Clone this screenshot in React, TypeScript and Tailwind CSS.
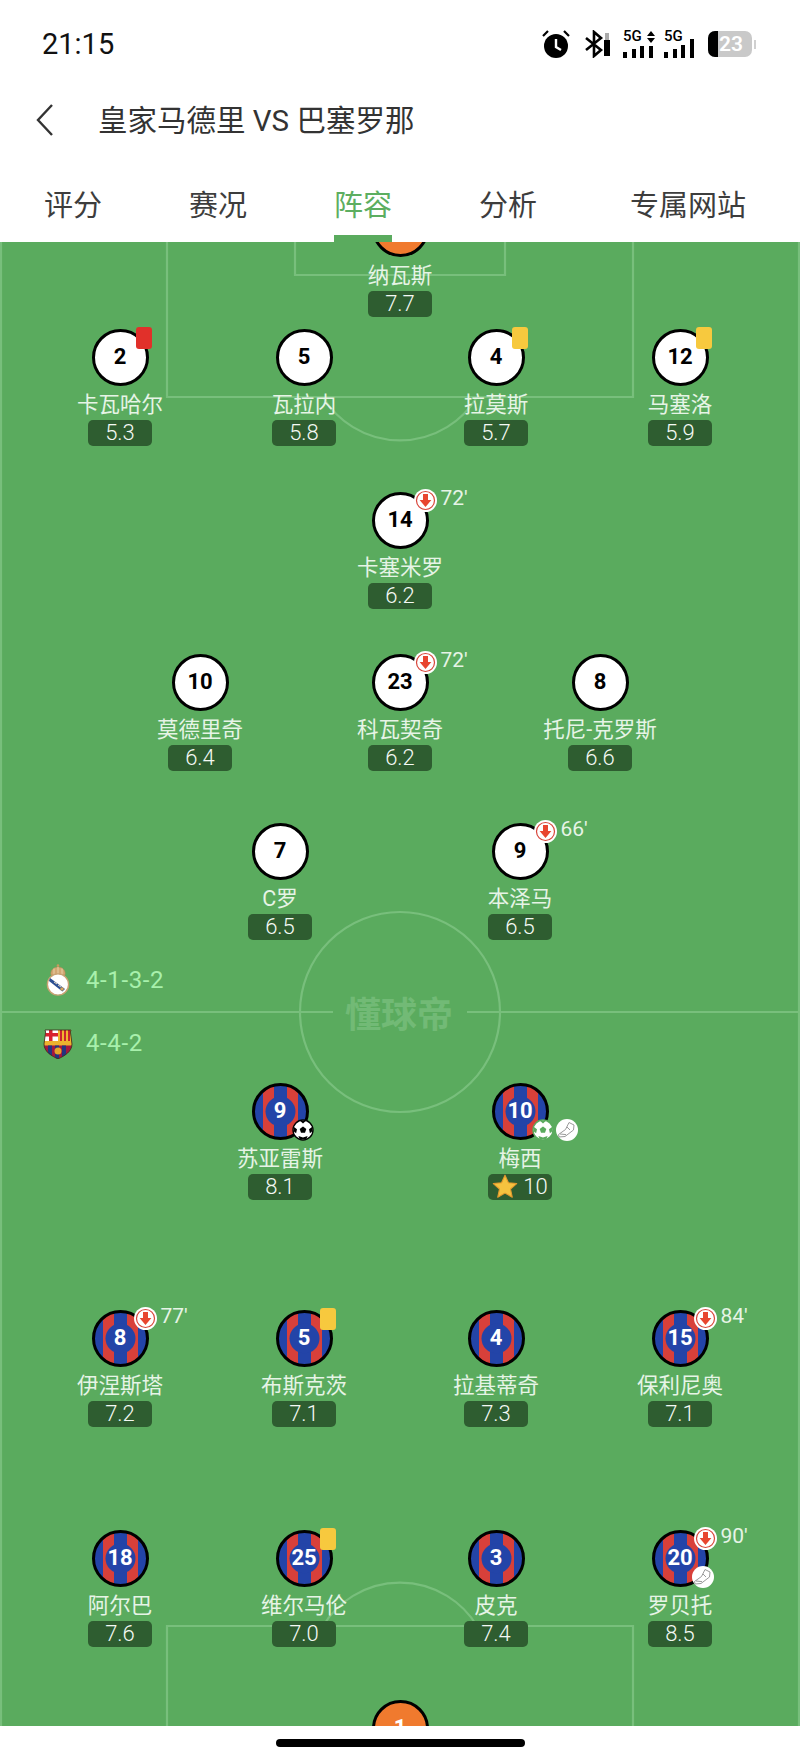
const CJK = "font-['Roboto','Noto_Sans_CJK_SC',sans-serif]";

type Badge = "red" | "yellow" | "ball" | "ballGreen" | "boot";

type Player = {
  no?: number;
  name?: string;
  rating?: string;
  x: number;
  y: number;
  kit: "white" | "barca" | "keeper";
  sub?: string;
  badges?: Badge[];
  star?: boolean;
};

const PITCH_TOP = 242;

// the two keepers are cut by the pitch edges, only what still shows is kept
const players: Player[] = [
  { name: "纳瓦斯", rating: "7.7", x: 400, y: 228, kit: "keeper" },
  { no: 2, name: "卡瓦哈尔", rating: "5.3", x: 120, y: 357, kit: "white", badges: ["red"] },
  { no: 5, name: "瓦拉内", rating: "5.8", x: 304, y: 357, kit: "white" },
  { no: 4, name: "拉莫斯", rating: "5.7", x: 496, y: 357, kit: "white", badges: ["yellow"] },
  { no: 12, name: "马塞洛", rating: "5.9", x: 680, y: 357, kit: "white", badges: ["yellow"] },
  { no: 14, name: "卡塞米罗", rating: "6.2", x: 400, y: 520, kit: "white", sub: "72'" },
  { no: 10, name: "莫德里奇", rating: "6.4", x: 200, y: 682, kit: "white" },
  { no: 23, name: "科瓦契奇", rating: "6.2", x: 400, y: 682, kit: "white", sub: "72'" },
  { no: 8, name: "托尼-克罗斯", rating: "6.6", x: 600, y: 682, kit: "white" },
  { no: 7, name: "C罗", rating: "6.5", x: 280, y: 851, kit: "white" },
  { no: 9, name: "本泽马", rating: "6.5", x: 520, y: 851, kit: "white", sub: "66'" },
  { no: 9, name: "苏亚雷斯", rating: "8.1", x: 280, y: 1111, kit: "barca", badges: ["ball"] },
  { no: 10, name: "梅西", rating: "10", x: 520, y: 1111, kit: "barca", badges: ["ballGreen", "boot"], star: true },
  { no: 8, name: "伊涅斯塔", rating: "7.2", x: 120, y: 1338, kit: "barca", sub: "77'" },
  { no: 5, name: "布斯克茨", rating: "7.1", x: 304, y: 1338, kit: "barca", badges: ["yellow"] },
  { no: 4, name: "拉基蒂奇", rating: "7.3", x: 496, y: 1338, kit: "barca" },
  { no: 15, name: "保利尼奥", rating: "7.1", x: 680, y: 1338, kit: "barca", sub: "84'" },
  { no: 18, name: "阿尔巴", rating: "7.6", x: 120, y: 1558, kit: "barca" },
  { no: 25, name: "维尔马伦", rating: "7.0", x: 304, y: 1558, kit: "barca", badges: ["yellow"] },
  { no: 3, name: "皮克", rating: "7.4", x: 496, y: 1558, kit: "barca" },
  { no: 20, name: "罗贝托", rating: "8.5", x: 680, y: 1558, kit: "barca", sub: "90'", badges: ["boot"] },
  { no: 1, x: 400, y: 1728, kit: "keeper" },
];

function Alarm() {
  return (
    <svg width="28" height="30" viewBox="0 0 28 30">
      <circle cx="14" cy="17" r="12" fill="#000" />
      <path d="M14 10v8l5 3" fill="none" stroke="#fff" strokeWidth="2.4" />
      <path d="M1 7l5-5M27 7l-5-5" stroke="#000" strokeWidth="2.2" />
    </svg>
  );
}

function Bluetooth() {
  return (
    <svg width="30" height="28" viewBox="0 0 30 28">
      <path d="M2 8l15 12-7 6V2l7 6L2 20" fill="none" stroke="#000" strokeWidth="2.6" />
      <rect x="20" y="10" width="6" height="16" fill="#000" />
      <rect x="21" y="3" width="4" height="7" fill="#aaa" />
    </svg>
  );
}

function Signal({ heights, arrows }: { heights: number[]; arrows?: boolean }) {
  return (
    <div className="relative h-[28px] w-[32px]">
      <span className="absolute left-0 top-[-2px] text-[15px] leading-[17px] font-medium text-black font-['Roboto',sans-serif]">5G</span>
      {arrows && (
        <svg className="absolute left-[24px] top-[1px]" width="8" height="12" viewBox="0 0 8 12">
          <path d="M4 0l4 5H0zM4 12l4-5H0z" fill="#000" />
        </svg>
      )}
      <div className="absolute bottom-0 left-0 flex items-end gap-[4.5px]">
        {heights.map((h, i) => (
          <div key={i} className="w-[4px] bg-black" style={{ height: h }} />
        ))}
      </div>
    </div>
  );
}

function Battery() {
  return (
    <div className="flex items-center">
      <div className="flex h-[26px] w-[44px] overflow-hidden rounded-[7px] bg-[#c9c9c9]">
        <div className="h-full w-[10px] bg-black" />
        <span className="pl-[1px] text-[21px] leading-[26px] font-semibold text-white font-['Roboto',sans-serif]">23</span>
      </div>
      <div className="ml-[2px] h-[9px] w-[2px] bg-[#d0d0d0]" />
    </div>
  );
}

function StatusBar() {
  return (
    <div className="flex h-[88px] items-center justify-between pl-[42px] pr-[44px]">
      <span className="text-[29px] leading-none text-[#111] font-['Roboto',sans-serif]">21:15</span>
      <div className="flex items-center">
        <Alarm />
        <div className="ml-[14px]">
          <Bluetooth />
        </div>
        <div className="ml-[9px] flex gap-[9px]">
          <Signal heights={[6, 9, 12, 12]} arrows />
          <Signal heights={[6, 9, 13, 19]} />
        </div>
        <div className="ml-[12px]">
          <Battery />
        </div>
      </div>
    </div>
  );
}

function Header() {
  return (
    <div className="flex h-[64px] items-center pl-[36px]">
      <svg width="18" height="32" viewBox="0 0 18 32">
        <path d="M16 1L2 16l14 15" fill="none" stroke="#333" strokeWidth="2.4" />
      </svg>
      <span className={`ml-[44px] mt-[3px] text-[29.5px] leading-none text-[#333] ${CJK}`}>皇家马德里 VS 巴塞罗那</span>
    </div>
  );
}

function Tabs() {
  const tabs = [
    { label: "评分", ml: "ml-0" },
    { label: "赛况", ml: "ml-[87px]" },
    { label: "阵容", ml: "ml-[87px]", active: true },
    { label: "分析", ml: "ml-[87px]" },
    { label: "专属网站", ml: "ml-[93px]" },
  ];
  return (
    <div className="flex h-[90px] items-start pl-[44px] pt-[36px]">
      {tabs.map((t) => (
        <div
          key={t.label}
          className={`relative text-[29px] leading-[36px] ${t.ml} ${t.active ? "text-[#5cae60]" : "text-[#3d3d3d]"} ${CJK}`}
        >
          {t.label}
          {t.active && <div className="absolute left-0 right-0 top-[47px] h-[7px] bg-[#5aab5e]" />}
        </div>
      ))}
    </div>
  );
}

function PitchLines() {
  const c = "#78bf7c";
  return (
    <svg className="absolute inset-0" width="800" height="1484" viewBox="0 0 800 1484" fill="none" stroke={c} strokeWidth="2.2">
      <path d="M1 0V1484M799 0V1484" />
      <path d="M167 0V155H633V0" />
      <path d="M295 0V33H505V0" />
      <path d="M323 155A90 90 0 0 0 477 155" />
      <path d="M0 770H333M467 770H800" />
      <circle cx="400" cy="770" r="100" />
      <path d="M167 1484V1384H633V1484" />
      <path d="M323 1384A90 90 0 0 1 477 1384" />
    </svg>
  );
}

function Jersey() {
  return (
    <svg className="absolute inset-0" width="57" height="57" viewBox="0 0 57 57">
      <clipPath id="kit">
        <circle cx="28.5" cy="28.5" r="27" />
      </clipPath>
      <g clipPath="url(#kit)">
        <rect width="57" height="57" fill="#2344a8" />
        <rect x="11" width="35" height="57" fill="#d8403a" />
        <rect x="22" width="13" height="57" fill="#2344a8" />
        <circle cx="28.5" cy="28.5" r="15" fill="#2344a8" />
      </g>
      <circle cx="28.5" cy="28.5" r="27" fill="none" stroke="#000" strokeWidth="3" />
    </svg>
  );
}

function SubIcon() {
  return (
    <svg width="23" height="23" viewBox="0 0 23 23">
      <circle cx="11.5" cy="11.5" r="11.5" fill="#fff" />
      <circle cx="11.5" cy="11.5" r="9" fill="none" stroke="#d8453a" strokeWidth="1.2" />
      <path d="M9 5h5v6h3.4l-5.9 7-5.9-7H9z" fill="#e8452f" />
    </svg>
  );
}

function Ball({ green }: { green?: boolean }) {
  const ink = green ? "#5aab5e" : "#000";
  return (
    <svg width="22" height="22" viewBox="0 0 22 22">
      <circle cx="11" cy="11" r="10" fill="#fff" stroke={ink} strokeWidth="1.4" />
      <path d="M11 7.5l3.3 2.4-1.3 3.9H9l-1.3-3.9z" fill={ink} />
      <path d="M8 1.8l6 0L11 4.6zM2 8l3 2.2-.9 4L1.4 12zM20 8l-3 2.2.9 4 2.7-2.2zM6.4 17l4.6 1.4 4.6-1.4-1.2 3.2H7.6z" fill={ink} />
    </svg>
  );
}

function Boot() {
  return (
    <svg width="22" height="22" viewBox="0 0 22 22">
      <circle cx="11" cy="11" r="11" fill="#fff" />
      <path d="M13 3.5l5 2.5-.5 5-8.5 6.5-6 .5-.5-2.5 7-5z" fill="#fff" stroke="#9a9a9a" strokeWidth="1" />
      <path d="M4 15l6 .6M11 8l3 3" stroke="#9a9a9a" strokeWidth="1" />
    </svg>
  );
}

function Star() {
  return (
    <svg width="26" height="25" viewBox="0 0 24 23">
      <path
        d="M12 1l3.2 7 7.6.8-5.7 5.1 1.6 7.5L12 17.6l-6.7 3.8 1.6-7.5L1.2 8.8 8.8 8z"
        fill="#f5c33f"
        stroke="#e59a2d"
        strokeWidth="1"
        strokeLinejoin="round"
      />
    </svg>
  );
}

function Card({ color }: { color: string }) {
  return <div className={`absolute left-[44px] top-[-2px] h-[22px] w-[16px] rounded-[3px] ${color}`} />;
}

function Shirt({ p }: { p: Player }) {
  const base =
    p.kit === "white"
      ? "border-[3px] border-black bg-white"
      : p.kit === "keeper"
        ? "border-[3px] border-black bg-[#f07a2e]"
        : "";
  const bottom = p.badges?.filter((b) => b !== "red" && b !== "yellow") ?? [];
  return (
    <div className={`relative grid h-[57px] w-[57px] place-items-center ${p.kit === "white" ? "text-black" : "text-white"}`}>
      <div className={`absolute inset-0 rounded-full ${base}`} />
      {p.kit === "barca" && <Jersey />}
      {p.no !== undefined && (
        <span className="relative text-[22px] font-bold leading-none font-['Roboto',sans-serif]">{p.no}</span>
      )}
      {p.badges?.includes("red") && <Card color="bg-[#e1302a]" />}
      {p.badges?.includes("yellow") && <Card color="bg-[#f7c93e]" />}
      {bottom.length > 0 && (
        <div className="absolute left-[40px] top-[36px] flex gap-[2px]">
          {bottom.map((b) =>
            b === "boot" ? <Boot key={b} /> : <Ball key={b} green={b === "ballGreen"} />,
          )}
        </div>
      )}
      {p.sub && (
        <div className="absolute left-[42px] top-[-3px] flex items-start gap-[4px]">
          <SubIcon />
          <span className="mt-[-2px] text-[21px] leading-[22px] text-[#e6f4e6] font-['Roboto',sans-serif]">{p.sub}</span>
        </div>
      )}
    </div>
  );
}

function PlayerNode({ p }: { p: Player }) {
  return (
    <div
      className="absolute flex w-[160px] flex-col items-center"
      style={{ left: p.x - 80, top: p.y - PITCH_TOP - 28.5 }}
    >
      <Shirt p={p} />
      {p.name && (
        <div className={`mt-[6px] h-[26px] text-[21.5px] leading-[26px] whitespace-nowrap text-[#e6f4e6] ${CJK}`}>{p.name}</div>
      )}
      {p.rating && (
        <div className="mt-[2px] flex h-[26px] w-[64px] items-center justify-center gap-[5px] rounded-[5px] bg-[#2e5d30] text-[22px] font-light leading-none text-[#f4f9f4] font-['Roboto',sans-serif]">
          {p.star && <Star />}
          {p.rating}
        </div>
      )}
    </div>
  );
}

function RealCrest() {
  return (
    <svg width="24" height="32" viewBox="0 0 24 32">
      <path d="M5 11C4 6 8 3 12 3s8 3 7 8z" fill="#d3a873" stroke="#b98a55" strokeWidth="0.6" />
      <path d="M8 4.5V11M12 3v8M16 4.5V11" stroke="#e8cfa8" strokeWidth="1" />
      <circle cx="12" cy="1.6" r="1.3" fill="#c99a5d" />
      <circle cx="12" cy="20.5" r="10.6" fill="#fff" stroke="#c9a273" strokeWidth="1.4" />
      <path d="M4 14l15 11-2.6 2.6L3 17z" fill="#2b4f93" />
      <path d="M8 18l3 2M12 21l3 2" stroke="#e8dcc4" strokeWidth="1" />
      <circle cx="16" cy="25" r="1.8" fill="#d3a35d" />
    </svg>
  );
}

function BarcaCrest() {
  return (
    <svg width="30" height="31" viewBox="0 0 30 31">
      <clipPath id="shield">
        <path d="M2 2h26l-.6 2L29 16c0 8-8 12-14 15C9 28 1 24 1 16L2.600 4z" />
      </clipPath>
      <g clipPath="url(#shield)">
        <rect width="30" height="31" fill="#a3173f" />
        <rect width="15" height="13" fill="#fff" />
        <rect x="6" width="3.500" height="13" fill="#d8232f" />
        <rect y="5" width="15" height="3.500" fill="#d8232f" />
        <rect x="15" width="15" height="13" fill="#f0b62e" />
        <path d="M18 0v13M22 0v13M26 0v13" stroke="#c9252f" strokeWidth="2" />
        <rect y="13" width="30" height="4.500" fill="#ecb22e" />
        <path d="M7 17.500v14M14 17.500v14M21 17.500v14" stroke="#23357f" strokeWidth="4" />
        <circle cx="15" cy="23" r="3.500" fill="#e6a52a" />
      </g>
      <path d="M2 2h26l-.6 2L29 16c0 8-8 12-14 15C9 28 1 24 1 16L2.600 4z" fill="none" stroke="#3b2a18" strokeWidth="0.8" />
    </svg>
  );
}

function Formation({ top, crest, label }: { top: number; crest: React.ReactNode; label: string }) {
  return (
    <div className="absolute left-[43px] flex h-[34px] items-center" style={{ top }}>
      <div className="grid w-[30px] place-items-center">{crest}</div>
      <span className="ml-[13px] text-[24px] leading-none tracking-[0.6px] text-[#a8f0ac] font-['Roboto',sans-serif]">{label}</span>
    </div>
  );
}

export default function App() {
  return (
    <div className="flex h-[1760px] w-[800px] flex-col overflow-hidden bg-white">
      <StatusBar />
      <Header />
      <Tabs />
      <div className="relative h-[1484px] overflow-hidden bg-[#5aab5e]">
        <PitchLines />
        <div className="absolute left-[345px] top-[744px] text-[36px] font-bold leading-[52px] text-[#72ba76] font-['Noto_Sans_CJK_SC',sans-serif]">
          懂球帝
        </div>
        <Formation top={721} crest={<RealCrest />} label="4-1-3-2" />
        <Formation top={784} crest={<BarcaCrest />} label="4-4-2" />
        {players.map((p) => (
          <PlayerNode key={`${p.kit}-${p.x}-${p.y}`} p={p} />
        ))}
      </div>
      <div className="flex h-[34px] justify-center pt-[13px]">
        <div className="h-[8px] w-[249px] rounded-full bg-black" />
      </div>
    </div>
  );
}
